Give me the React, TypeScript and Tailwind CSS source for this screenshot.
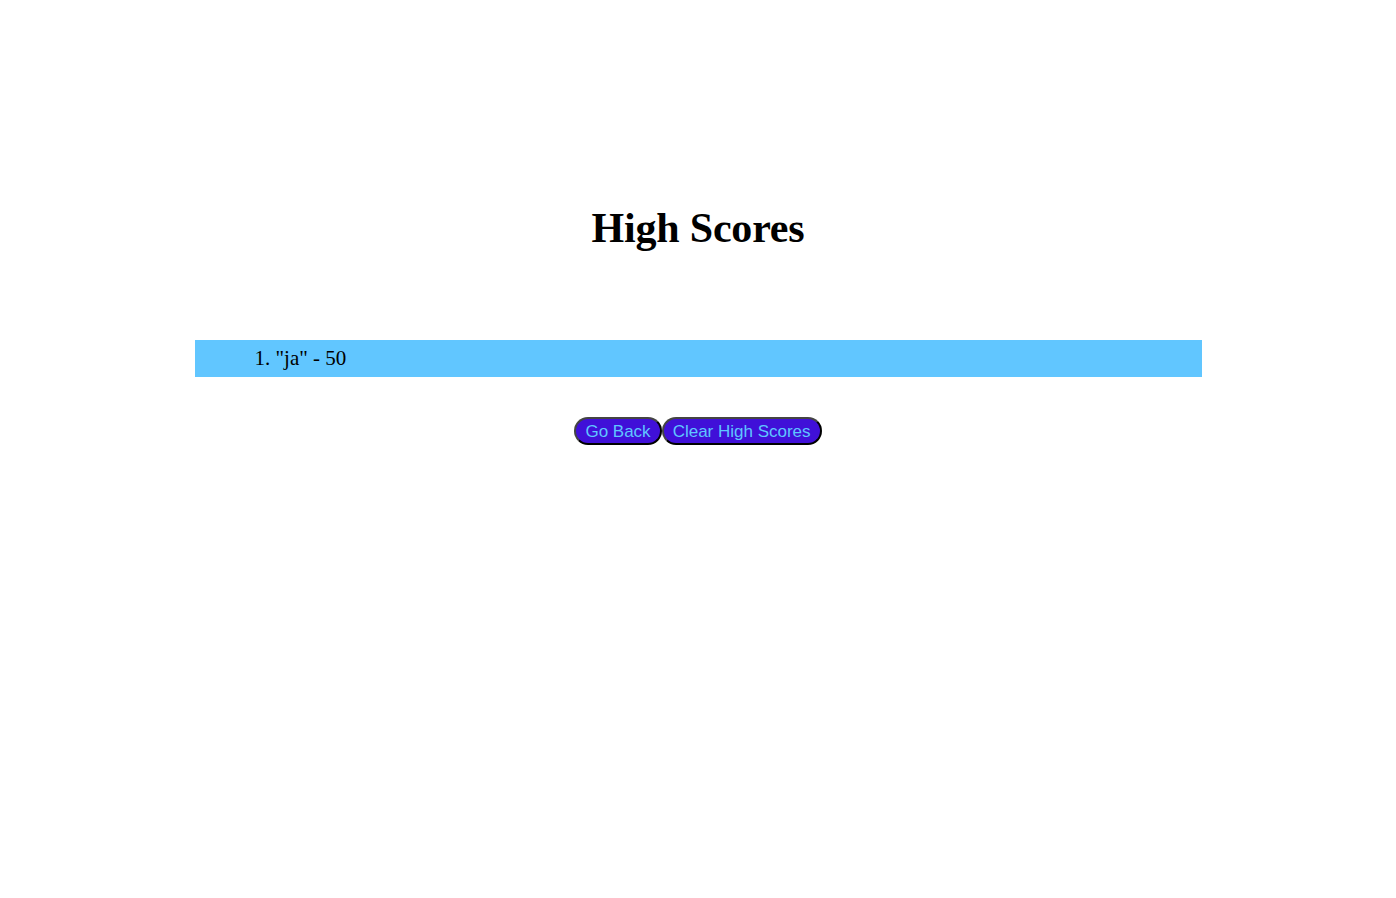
import React from "react";

export default function App() {
  return (
    <div className="min-h-[898px] w-full bg-white" style={{ fontFamily: '"Liberation Serif", serif' }}>
      <div className="pt-[195px] flex flex-col items-center">
        <h1 className="text-[42px] font-bold leading-[66px] text-black tracking-[-0.2px]">High Scores</h1>
        <div className="mt-[79px] w-[1007px] h-[37px] bg-[#61c6ff] flex items-center pl-[60px] text-[21px] text-black">
          1. "ja" - 50
        </div>
        <div className="mt-[40px] flex gap-0" style={{ fontFamily: '"Liberation Sans", Arial, sans-serif' }}>
          <button className="h-[28px] px-[9px] pb-[2px] rounded-full bg-[#4010d8] text-[#5fc6ff] text-[17px] border-2 border-[#444] [border-style:outset]">
            Go Back
          </button>
          <button className="h-[28px] px-[9px] pb-[2px] rounded-full bg-[#4010d8] text-[#5fc6ff] text-[17px] border-2 border-[#444] [border-style:outset]">
            Clear High Scores
          </button>
        </div>
      </div>
    </div>
  );
}
